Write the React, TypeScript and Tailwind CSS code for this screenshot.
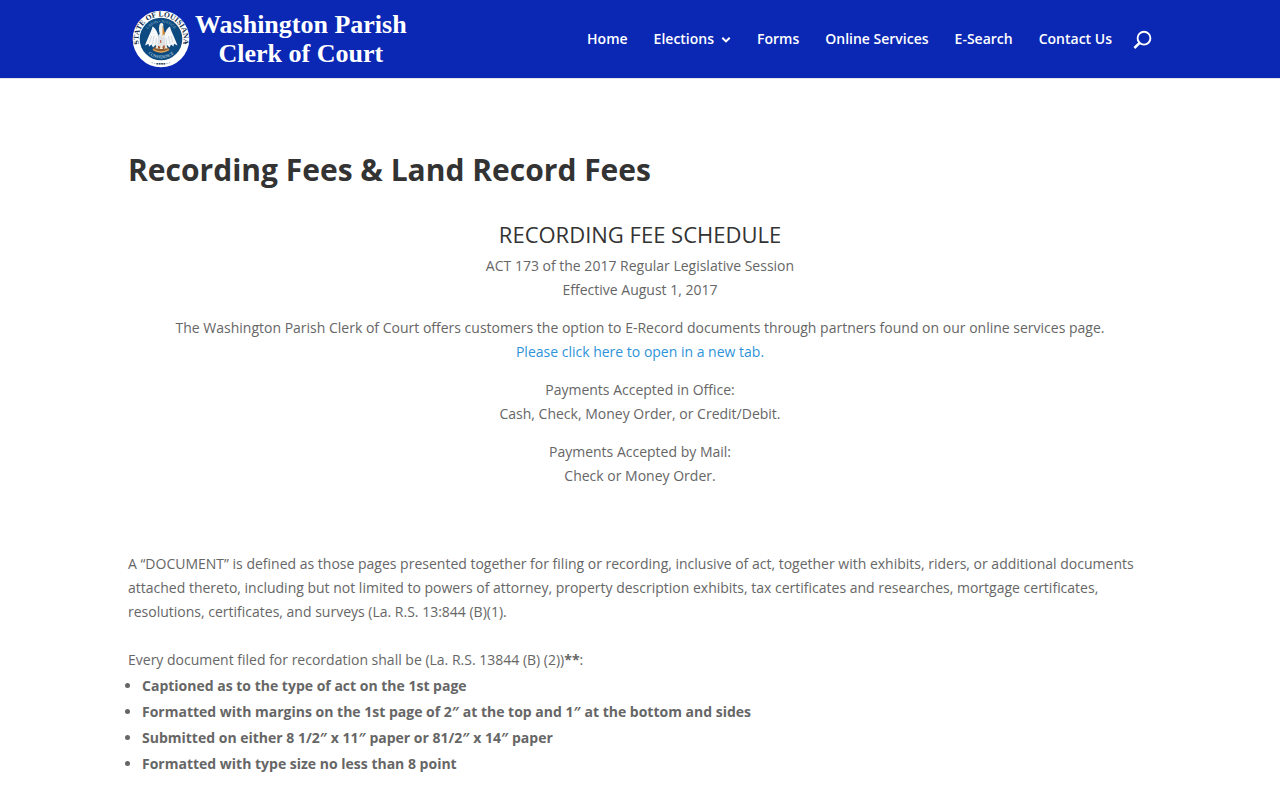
import clsx from "clsx";

type NavItem = {
  label: string;
  hasMenu?: boolean;
};

const navItems: NavItem[] = [
  { label: "Home" },
  { label: "Elections", hasMenu: true },
  { label: "Forms" },
  { label: "Online Services" },
  { label: "E-Search" },
  { label: "Contact Us" },
];

const requirements = [
  "Captioned as to the type of act on the 1st page",
  "Formatted with margins on the 1st page of 2″ at the top and 1″ at the bottom and sides",
  "Submitted on either 8 1/2″ x 11″ paper or 81/2″ x 14″ paper",
  "Formatted with type size no less than 8 point",
];

const StateSeal: React.FC = () => (
  <svg viewBox="0 0 60 60" className="size-15 shrink-0" aria-hidden="true">
    <defs>
      <path id="ring-top" d="M10.1 40.5 A22.5 22.5 0 1 1 49.9 40.5" />
      <path id="motto-top" d="M13.5 30 A16.5 16.5 0 0 1 46.5 30" />
      <path id="motto-bottom" d="M11 34 A19.4 19.4 0 0 0 49 34" />
    </defs>
    <circle cx="30" cy="30" r="28.3" fill="#fff" />
    <circle cx="30" cy="30" r="21.3" fill="#0d4a80" />
    <g fontFamily="Liberation Serif, serif" textAnchor="middle">
      <text fontSize="7.6" fontWeight="700" fill="#16304f">
        <textPath href="#ring-top" startOffset="50%">
          STATE OF LOUISIANA
        </textPath>
      </text>
      <text fontSize="3.8" fill="#9dbbd2">
        <textPath href="#motto-top" startOffset="50%">
          UNION • JUSTICE
        </textPath>
      </text>
      <text fontSize="4.4" fill="#d5e3ee">
        <textPath href="#motto-bottom" startOffset="50%">
          CONFIDENCE
        </textPath>
      </text>
    </g>
    <circle cx="5.2" cy="34.5" r="0.8" fill="#1d3a5c" />
    <circle cx="54.8" cy="34.5" r="0.8" fill="#1d3a5c" />
    <path d="M20.5 53.4 Q30 57 39.5 53.4" fill="none" stroke="#7d8c9d" strokeWidth="0.7" strokeDasharray="1.5 1" />
    <path d="M25.5 54.8 H34.5" stroke="#3b4c63" strokeWidth="1.5" strokeDasharray="1.8 0.5" />

    {/* nest */}
    <ellipse cx="30" cy="40.3" rx="8.3" ry="3.2" fill="#8d5a2c" />
    <path d="M22 40.5 Q30 45.5 38 40.5" fill="none" stroke="#d8a662" strokeWidth="1.3" />
    {/* wings */}
    <path
      d="M27.5 27 C26 22 24 18.5 21.5 17.5 C20.5 22 18 26 14 36.5 L17.5 34.8 L18 37.5 L20.5 35.5 L22 38.5 L24.5 36 L26 38 L29.5 35 Z"
      fill="#f6f7f8"
    />
    <path
      d="M33 27 C34.5 22 36.5 18.5 39 17.5 C40 22 42.5 26 46.5 36.5 L43 34.8 L42.5 37.5 L40 35.5 L38.5 38.5 L36 36 L34.5 38 L31 35 Z"
      fill="#f6f7f8"
    />
    <path
      d="M20.5 27 L18.5 33.5 M23 27 L21.5 35 M25.5 29 L24.8 35.5 M40 27 L42 33.5 M37.5 27 L39 35 M35 29 L35.8 35.5"
      stroke="#b0bac2"
      strokeWidth="0.5"
    />
    {/* body, neck and bill */}
    <path d="M27.5 26 Q30.5 22 33.5 26 L34.5 36 Q30.5 40 26.5 36 Z" fill="#dfe2e4" />
    <path d="M31 28 C27.6 25 27.6 19 28.6 15.5 Q30.5 12.6 32.4 15.5 C31.6 19 34 23 33 27 Z" fill="#f3f0e6" />
    <path d="M31.5 16.5 L34 24.5 L31.5 27 Z" fill="#d68a31" />
    {/* chicks */}
    <path d="M24.5 39.5 L26 34.5 L28 39.5 Z M28.5 40 L30.5 35 L32 40 Z M33 39.5 L35 34.5 L36.5 39.5 Z" fill="#efe6d5" />
    <path d="M29.7 31 V34 M27.5 37 V39 M33 36 V39" stroke="#b9452c" strokeWidth="0.9" />
  </svg>
);

const Header: React.FC = () => (
  <header className="bg-[#0a28b4] text-white shadow-[0_1px_0_rgba(0,0,0,0.1)]">
    <div className="mx-auto flex w-4/5 items-center justify-between">
      <a href="#home" className="flex h-[78px] items-center gap-1 pl-[3px]">
        <StateSeal />
        <span className="text-center font-['Liberation_Serif',serif] text-[26px] leading-[29px] font-bold whitespace-nowrap">
          Washington Parish
          <br />
          Clerk of Court
        </span>
      </a>

      <nav className="flex items-center gap-[26px] text-sm font-semibold whitespace-nowrap">
        {navItems.map(({ label, hasMenu }) => (
          <a
            key={label}
            href={`#${label.toLowerCase().replace(" ", "-")}`}
            className={clsx(hasMenu && "flex items-center gap-[7px]")}
          >
            {label}
            {hasMenu && (
              <svg viewBox="0 0 10 8" className="mt-0.5 h-2 w-2.5" aria-hidden="true">
                <path d="M1.3 1.8 L5 5.4 L8.7 1.8" fill="none" stroke="currentColor" strokeWidth="2.1" />
              </svg>
            )}
          </a>
        ))}
        <button type="button" aria-label="Search" className="-ml-1.5">
          <svg viewBox="0 0 20 20" className="size-5" aria-hidden="true">
            <circle cx="12" cy="9.2" r="6.4" fill="none" stroke="currentColor" strokeWidth="1.9" />
            <path d="M7.6 13.8 L2.4 19" stroke="currentColor" strokeWidth="2.5" />
          </svg>
        </button>
      </nav>
    </div>
  </header>
);

const FeeSchedule: React.FC = () => (
  <section className="text-center">
    <h2 className="mb-2 text-[22px] leading-6 text-[#333]">RECORDING FEE SCHEDULE</h2>
    <div className="flex flex-col gap-3.5">
      <p>
        ACT 173 of the 2017 Regular Legislative Session
        <br />
        Effective August 1, 2017
      </p>
      <p>
        The Washington Parish Clerk of Court offers customers the option to E-Record documents through partners found
        on our online services page.
        <br />
        <a href="#online-services" className="text-[#2e93d9]">
          Please click here to open in a new tab.
        </a>
      </p>
      <p>
        Payments Accepted in Office:
        <br />
        Cash, Check, Money Order, or Credit/Debit.
      </p>
      <p>
        Payments Accepted by Mail:
        <br />
        Check or Money Order.
      </p>
    </div>
  </section>
);

const App: React.FC = () => {
  return (
    <div className="bg-white font-['Open_Sans',sans-serif] text-sm leading-6 text-[#666]">
      <Header />

      <main className="mx-auto w-4/5 pt-[72px] pb-6">
        <h1 className="mb-8 text-[30px] leading-10 font-bold text-[#333]">Recording Fees &amp; Land Record Fees</h1>

        <FeeSchedule />

        <section className="mt-16">
          <p>
            A “DOCUMENT” is defined as those pages presented together for filing or recording, inclusive of act,
            together with exhibits, riders, or additional documents attached thereto, including but not limited to
            powers of attorney, property description exhibits, tax certificates and researches, mortgage certificates,
            resolutions, certificates, and surveys (La. R.S. 13:844 (B)(1).
          </p>
          <p className="mt-6">
            Every document filed for recordation shall be (La. R.S. 13844 (B) (2))<strong>**</strong>:
          </p>
          <ul className="mt-px list-disc pl-3.5 leading-[26px] font-bold">
            {requirements.map((item) => (
              <li key={item}>{item}</li>
            ))}
          </ul>
        </section>
      </main>
    </div>
  );
};

export default App;
